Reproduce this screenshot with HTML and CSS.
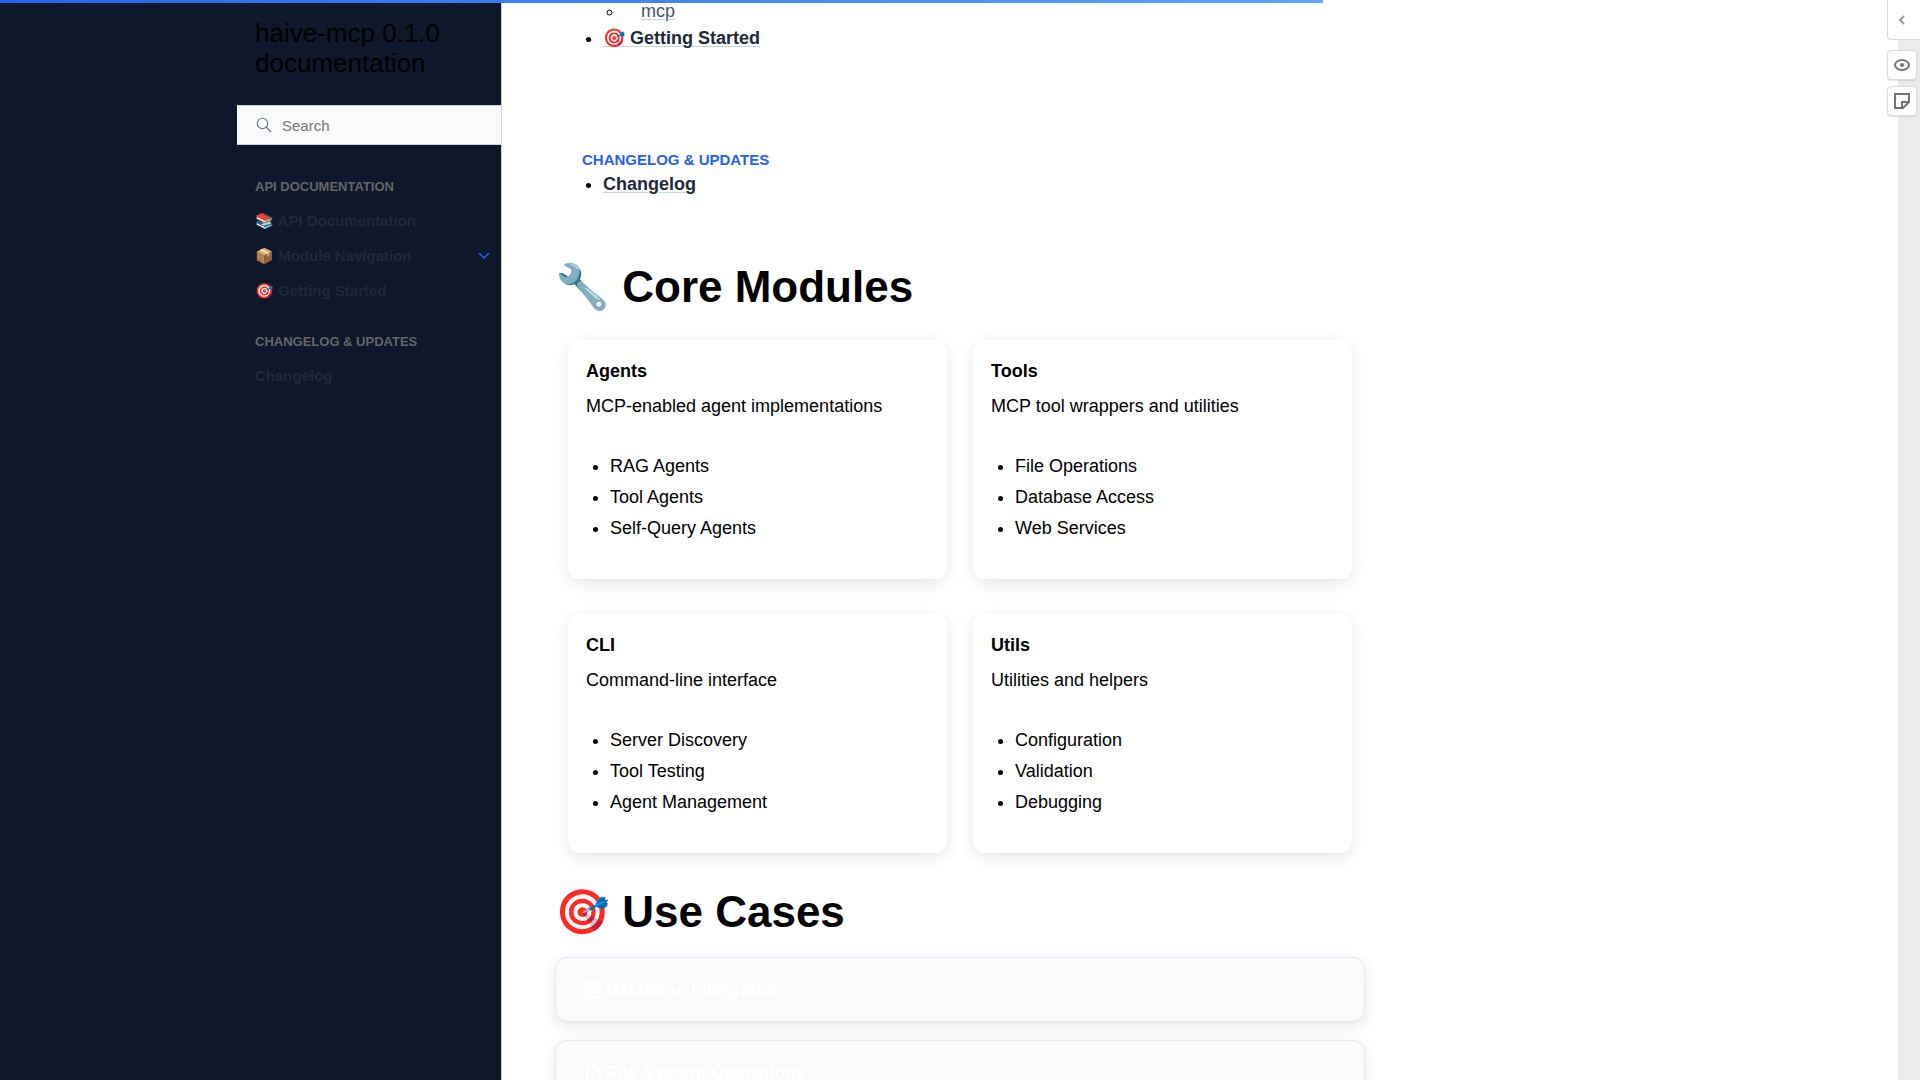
FILE: index.html
```html
<!DOCTYPE html>
<html lang="en">
<head>
<meta charset="utf-8">
<meta name="viewport" content="width=device-width, initial-scale=1">
<title>haive-mcp 0.1.0 documentation</title>
<link rel="stylesheet" href="styles.css">
</head>
<body>
<div class="progress"></div>
<div class="page">
  <aside class="sidebar">
    <div class="sidebar-inner">
      <a class="brand" href="#">haive-mcp 0.1.0 documentation</a>
      <form class="search" role="search">
        <svg class="search-icon" viewBox="0 0 24 24" aria-hidden="true"><circle cx="10" cy="10" r="7"/><path d="M21 21l-6-6"/></svg>
        <input class="search-input" type="search" placeholder="Search" aria-label="Search">
      </form>
      <nav class="nav">
        <p class="nav-caption">API DOCUMENTATION</p>
        <ul class="nav-list">
          <li><a href="#">📚 API Documentation</a></li>
          <li><a href="#">📦 Module Navigation</a>
            <button class="nav-toggle" type="button" aria-label="Toggle Module Navigation"><svg viewBox="0 0 12 8" aria-hidden="true"><path d="M1 1l5 5 5-5"/></svg></button></li>
          <li><a href="#">🎯 Getting Started</a></li>
        </ul>
        <p class="nav-caption">CHANGELOG &amp; UPDATES</p>
        <ul class="nav-list">
          <li><a href="#">Changelog</a></li>
        </ul>
      </nav>
    </div>
  </aside>
  <main class="main">
    <article class="content">
      <div class="toctree">
        <ul class="toc-list">
          <li class="toc-sub"><a href="#">mcp</a></li>
          <li><a href="#">🎯 Getting Started</a></li>
        </ul>
        <p class="toc-caption">CHANGELOG &amp; UPDATES</p>
        <ul class="toc-list">
          <li><a href="#">Changelog</a></li>
        </ul>
      </div>
      <h1 class="heading">🔧 Core Modules</h1>
      <div class="grid">
        <section class="card">
          <h2 class="card-title">Agents</h2>
          <p class="card-text">MCP-enabled agent implementations</p>
          <ul class="card-list"><li>RAG Agents</li><li>Tool Agents</li><li>Self-Query Agents</li></ul>
        </section>
        <section class="card">
          <h2 class="card-title">Tools</h2>
          <p class="card-text">MCP tool wrappers and utilities</p>
          <ul class="card-list"><li>File Operations</li><li>Database Access</li><li>Web Services</li></ul>
        </section>
        <section class="card">
          <h2 class="card-title">CLI</h2>
          <p class="card-text">Command-line interface</p>
          <ul class="card-list"><li>Server Discovery</li><li>Tool Testing</li><li>Agent Management</li></ul>
        </section>
        <section class="card">
          <h2 class="card-title">Utils</h2>
          <p class="card-text">Utilities and helpers</p>
          <ul class="card-list"><li>Configuration</li><li>Validation</li><li>Debugging</li></ul>
        </section>
      </div>
      <h1 class="heading heading-cases">🎯 Use Cases</h1>
      <details class="dropdown">
        <summary>
          <svg class="drop-icon" viewBox="0 0 16 18" aria-hidden="true"><ellipse cx="8" cy="4" rx="7" ry="3"/><path d="M1 4v10c0 4 14 4 14 0V4M1 9c0 4 14 4 14 0"/></svg>
          <span>Database Integration</span>
          <svg class="drop-chevron" viewBox="0 0 10 18" aria-hidden="true"><path d="M1 2l7 7-7 7"/></svg>
        </summary>
      </details>
      <details class="dropdown">
        <summary>
          <svg class="drop-icon" viewBox="0 0 16 18" aria-hidden="true"><path d="M3 1h7l5 5v10q0 1-1 1H3q-1 0-1-1V2q0-1 1-1zM10 1v5h5"/></svg>
          <span>File System Operations</span>
          <svg class="drop-chevron" viewBox="0 0 10 18" aria-hidden="true"><path d="M1 2l7 7-7 7"/></svg>
        </summary>
      </details>
    </article>
  </main>
</div>
<div class="rail">
  <button class="rail-open" type="button" aria-label="Open annotations"><svg viewBox="0 0 8 12" aria-hidden="true"><path d="M6 2L2 6l4 4"/></svg></button>
  <button class="rail-button" type="button" aria-label="Show highlights"><svg viewBox="0 0 16 16" aria-hidden="true"><ellipse cx="8" cy="8" rx="7" ry="5"/><circle class="dot" cx="8" cy="8" r="2"/></svg></button>
  <button class="rail-button" type="button" aria-label="New page note"><svg viewBox="0 0 16 16" aria-hidden="true"><path d="M1 1h14v8l-6 6H1zM8 15V9h7"/></svg></button>
</div>
</body>
</html>
```
FILE: styles.css
```css
* { box-sizing: border-box; }

body {
  margin: 0;
  background: #fff;
  color: #000;
  font: 18px/26px "Liberation Sans", Arial, sans-serif;
}

ul, p, h1, h2 { margin: 0; }

.progress {
  position: fixed;
  top: 0;
  left: 0;
  z-index: 5;
  width: 68.9%;
  height: 3px;
  background: linear-gradient(90deg, #2563eb, #60a5fa);
}

.page {
  display: flex;
  height: 100vh;
  overflow: hidden;
}

/* Sidebar */
.sidebar {
  display: flex;
  flex: none;
  justify-content: flex-end;
  width: calc(50% - 458px);
  background: #0f172a;
  border-right: 1px solid #cbd5e1;
}

.sidebar-inner { width: 264px; padding-top: 18px; }

.brand {
  display: block;
  padding: 0 18px;
  color: #000;
  font-size: 26px;
  line-height: 30px;
  text-decoration: none;
}

.search {
  display: flex;
  align-items: center;
  gap: 9px;
  height: 40px;
  margin-top: 27px;
  padding-left: 18px;
  background: #f8fafc;
  border: solid #cbd5e1;
  border-width: 1px 0;
}

.search-icon {
  flex: none;
  width: 18px;
  height: 18px;
  fill: none;
  stroke: #6b7280;
  stroke-width: 1.5;
  stroke-linecap: round;
}

.search-input {
  width: 100%;
  padding: 2px 0 0;
  border: 0;
  outline: 0;
  background: none;
  font: 15px/18px "Liberation Sans", Arial, sans-serif;
}

.search-input::placeholder { color: #757575; }

.nav { padding: 8px 11px 0 18px; }

.nav-caption {
  margin-top: 24px;
  color: #64676d;
  font-size: 13px;
  font-weight: 700;
  line-height: 20px;
}

.nav-list {
  padding: 6px 0 0;
  list-style: none;
  font-size: 15px;
  font-weight: 700;
  line-height: 35px;
}

.nav-list li { display: flex; align-items: center; justify-content: space-between; }
.nav-list a { color: #1e293b; text-decoration: none; }

.nav-toggle {
  display: flex;
  padding: 0;
  border: 0;
  background: none;
}

.nav-toggle svg {
  width: 12px;
  height: 8px;
  fill: none;
  stroke: #2563eb;
  stroke-width: 1.5;
}

/* Content */
.main { flex: 1; padding: 0 53px; }
.content { max-width: 810px; }

.toctree { padding-left: 27px; line-height: 22px; }
.toc-list { padding-left: 21px; }
.toc-list li + li { margin-top: 5px; }
.toc-list a {
  color: #1e293b;
  font-weight: 700;
  text-decoration: underline #cbd5e1 1px;
  text-underline-offset: 2px;
}
.toc-list .toc-sub { margin-left: 21px; padding-left: 17px; list-style: circle; }
.toc-list .toc-sub a { color: #475569; font-weight: 400; }

.toc-caption {
  margin: 100px 0 2px;
  color: #2563eb;
  font-size: 15px;
  font-weight: 700;
}

.heading {
  margin: 64px 0 26px;
  font-size: 44px;
  line-height: 55px;
}

.heading-cases { margin: 31px 0 18px; }

.grid {
  display: grid;
  grid-template-columns: 1fr 1fr;
  gap: 35px 26px;
  padding: 0 13px;
}

.card {
  padding: 18px 18px 38px;
  border-radius: 12px;
  background: #fff;
  box-shadow: 0 4px 16px rgba(0, 0, 0, .1);
}

.card-title { margin-bottom: 9px; font-size: 18px; line-height: 26px; }
.card-list { margin-top: 34px; padding-left: 24px; }
.card-list li + li { margin-top: 5px; }

.dropdown {
  margin-bottom: 18px;
  border: 1px solid #e2e8f0;
  border-radius: 12px;
  background: #f8fafc;
  box-shadow: 0 4px 16px rgba(0, 0, 0, .1);
}

.dropdown summary {
  display: flex;
  align-items: center;
  gap: 5px;
  height: 63px;
  padding: 0 35px 0 29px;
  color: #fff;
  font-weight: 700;
  list-style: none;
}

.dropdown svg { fill: none; stroke: #fff; stroke-width: 2; }
.drop-icon { width: 16px; height: 18px; }
.dropdown .drop-chevron { width: 10px; height: 18px; margin-left: auto; stroke-width: 1.5; opacity: .7; }

/* Annotation rail pinned over the right edge */
.rail {
  position: fixed;
  top: 0;
  right: 0;
  bottom: 0;
  display: flex;
  flex-direction: column;
  align-items: flex-start;
  width: 33px;
  background: linear-gradient(90deg, transparent 11px, #ebebeb 11px);
}

.rail button {
  display: flex;
  align-items: center;
  justify-content: center;
  padding: 0;
  border: 1px solid #dbdbdb;
  background: #fff;
}

.rail .rail-open {
  width: 33px;
  height: 40px;
  margin-bottom: 10px;
  padding-right: 4px;
  border-width: 0 0 1px 1px;
  border-radius: 0 0 0 4px;
}

.rail .rail-button {
  width: 30px;
  height: 30px;
  margin-bottom: 6px;
  border-radius: 4px;
  box-shadow: 0 1px 1px rgba(0, 0, 0, .1);
}

.rail svg { fill: none; stroke: #737373; stroke-width: 2; }
.rail-button svg { width: 16px; height: 16px; }
.rail-open svg { width: 8px; height: 12px; stroke: #9c9c9c; }
.rail .dot { fill: #737373; stroke: none; }
```
